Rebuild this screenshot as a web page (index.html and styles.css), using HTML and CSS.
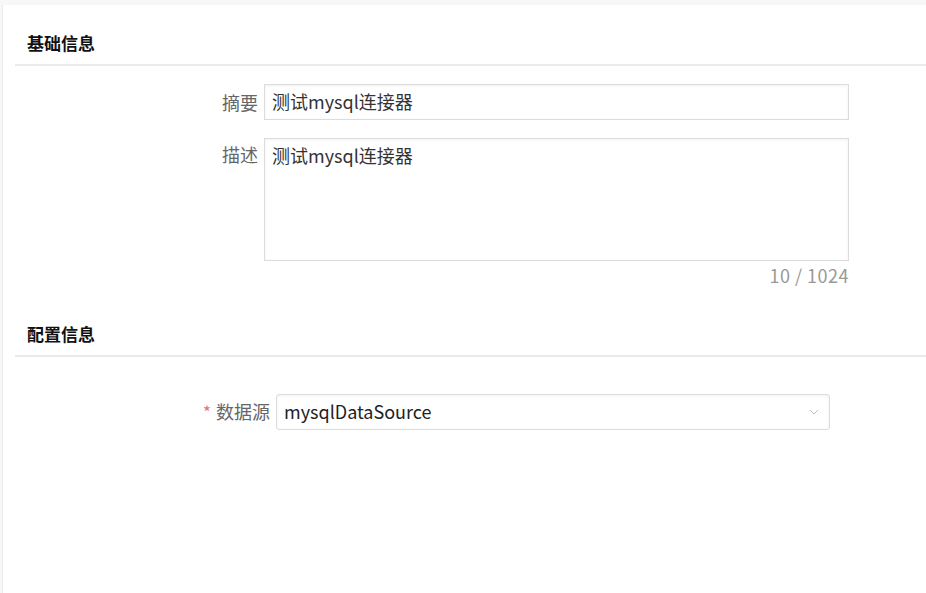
FILE: index.html
```html
<!DOCTYPE html>
<html lang="zh">
<head>
<meta charset="utf-8">
<link rel="stylesheet" href="styles.css">
</head>
<body>
<div class="topbar"></div>
<div class="panel">
  <div class="section-title">基础信息</div>
  <div class="form form-basic">
    <div class="row">
      <div class="label">摘要</div>
      <div class="control"><div class="input">测试mysql连接器</div></div>
    </div>
    <div class="row row-top">
      <div class="label label-top">描述</div>
      <div class="control">
        <div class="textarea">测试mysql连接器</div>
        <div class="counter">10 / 1024</div>
      </div>
    </div>
  </div>
  <div class="section-title section-title-2">配置信息</div>
  <div class="form form-config">
    <div class="row">
      <div class="label"><span class="req">*</span>数据源</div>
      <div class="control">
        <div class="select">
          <span>mysqlDataSource</span>
          <svg class="chev" width="10" height="6" viewBox="0 0 10 6"><polyline points="1,1 5,5 9,1" fill="none" stroke="#bdbdbd" stroke-width="1"/></svg>
        </div>
      </div>
    </div>
  </div>
</div>
</body>
</html>
```

FILE: styles.css
```css
html, body {
  margin: 0;
  padding: 0;
  height: 100%;
}
body {
  background: #f7f7f7;
  font-family: "Noto Sans CJK SC", "Noto Sans", sans-serif;
  font-size: 18px;
  color: #333;
  display: flex;
  flex-direction: column;
}
.topbar {
  height: 5px;
  flex: none;
}
.panel {
  flex: 1;
  margin-left: 2px;
  border-left: 1px solid #ececec;
  background: #fff;
  padding-left: 12px;
}
.section-title {
  padding: 26px 12px 9px;
  line-height: 24px;
  font-size: 17px;
  font-weight: 700;
  color: #111;
  border-bottom: 2px solid #ebebeb;
}
.section-title-2 {
  margin-top: 9px;
}
.form-basic {
  padding-top: 18px;
}
.form-config {
  padding-top: 36px;
}
.row {
  display: flex;
  align-items: center;
  gap: 6px;
}
.row-top {
  align-items: flex-start;
  margin-top: 18px;
}
.label {
  text-align: right;
  color: #666;
  line-height: 36px;
  white-space: nowrap;
}
.form-basic .label { width: 243px; }
.form-config .label { width: 255px; }
.label-top {
  line-height: 24px;
  margin-top: 4px;
}
.req {
  color: #e57373;
  margin-right: 5px;
  font-size: 17px;
}
.input, .textarea, .select {
  box-sizing: border-box;
  border: 1px solid #dcdcdc;
  box-shadow: inset 0 1px 3px rgba(0, 0, 0, 0.06);
  background: #fff;
  color: #333;
  padding: 0 7px;
}
.input {
  width: 585px;
  height: 36px;
  line-height: 33px;
}
.textarea {
  width: 585px;
  height: 123px;
  padding-top: 4px;
  line-height: 24px;
}
.counter {
  margin-top: 2px;
  line-height: 24px;
  text-align: right;
  color: #999;
  width: 585px;
  letter-spacing: 0.5px;
}
.select {
  width: 554px;
  height: 36px;
  line-height: 33px;
  border-radius: 3px;
  display: flex;
  justify-content: space-between;
  align-items: center;
  padding-right: 10px;
  color: #222;
}
.chev {
  display: block;
}
```
